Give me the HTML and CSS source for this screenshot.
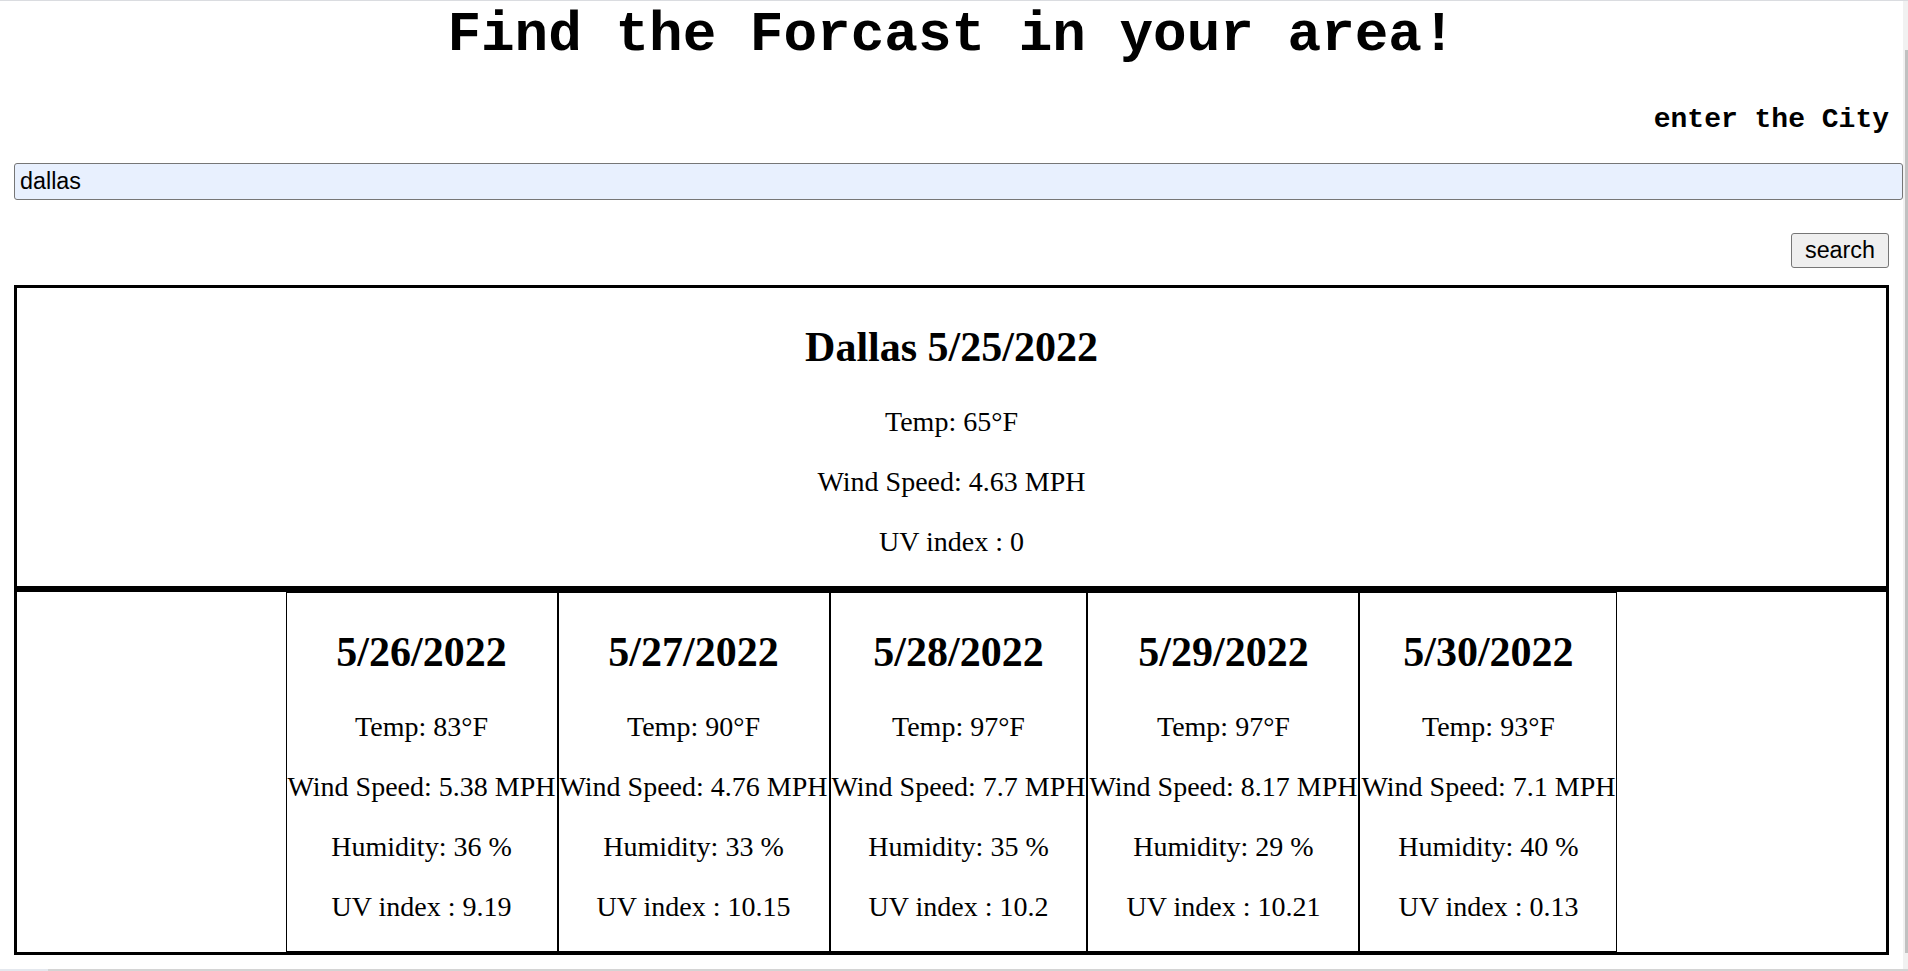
FILE: index.html
```html
<!DOCTYPE html>
<html lang="en">
<head>
<meta charset="utf-8">
<title>Weather Dashboard</title>
<link rel="stylesheet" href="styles.css">
</head>
<body>
<div class="frame">
  <div class="topline"></div>
  <div class="viewport">
    <main class="page">
      <h1 class="title">Find the Forcast in your area!</h1>
      <p class="city-label">enter the City</p>
      <input class="city-input" type="text" value="dallas">
      <div class="search-row"><button class="search-btn" type="button">search</button></div>
      <section class="current">
        <h2>Dallas 5/25/2022</h2>
        <p>Temp: 65°F</p>
        <p>Wind Speed: 4.63 MPH</p>
        <p>UV index : 0</p>
      </section>
      <section class="forecast">
        <div class="card">
          <h2>5/26/2022</h2>
          <p>Temp: 83°F</p>
          <p>Wind Speed: 5.38 MPH</p>
          <p>Humidity: 36 %</p>
          <p>UV index : 9.19</p>
        </div>
        <div class="card">
          <h2>5/27/2022</h2>
          <p>Temp: 90°F</p>
          <p>Wind Speed: 4.76 MPH</p>
          <p>Humidity: 33 %</p>
          <p>UV index : 10.15</p>
        </div>
        <div class="card">
          <h2>5/28/2022</h2>
          <p>Temp: 97°F</p>
          <p>Wind Speed: 7.7 MPH</p>
          <p>Humidity: 35 %</p>
          <p>UV index : 10.2</p>
        </div>
        <div class="card">
          <h2>5/29/2022</h2>
          <p>Temp: 97°F</p>
          <p>Wind Speed: 8.17 MPH</p>
          <p>Humidity: 29 %</p>
          <p>UV index : 10.21</p>
        </div>
        <div class="card">
          <h2>5/30/2022</h2>
          <p>Temp: 93°F</p>
          <p>Wind Speed: 7.1 MPH</p>
          <p>Humidity: 40 %</p>
          <p>UV index : 0.13</p>
        </div>
      </section>
    </main>
    <div class="vscroll"><div class="thumb"></div></div>
  </div>
  <div class="hscroll"><div class="hthumb"></div></div>
</div>
</body>
</html>
```
FILE: styles.css
```css
html, body {
  margin: 0;
  padding: 0;
  background: #fff;
  overflow: hidden;
}

.frame {
  height: 100vh;
  display: flex;
  flex-direction: column;
}

.topline {
  flex: none;
  height: 1px;
  background: #dadce0;
}

.viewport {
  flex: 1;
  min-height: 0;
  display: flex;
}

.page {
  flex: 1;
  min-width: 0;
  padding: 0 14px;
  font-family: "Liberation Serif", "Times New Roman", serif;
  font-size: 28px;
  color: #000;
  overflow: hidden;
}

.vscroll {
  flex: none;
  width: 5px;
  box-sizing: border-box;
  padding: 49px 0 16px 2px;
  background: #f1f1f1;
  display: flex;
  flex-direction: column;
}

.thumb {
  flex: 1;
  background: #c1c1c1;
}

.hscroll {
  flex: none;
  height: 2px;
  background: #e4e8ee;
  display: flex;
  padding-left: 48px;
}

.hthumb {
  flex: 1;
  background: #d4d4d4;
}

.title {
  margin: 2px 0 0;
  font-family: "Liberation Mono", "Courier New", monospace;
  font-weight: bold;
  font-size: 56px;
  line-height: normal;
  text-align: center;
}

.city-label {
  margin: 37px 0 0;
  font-family: "Liberation Mono", "Courier New", monospace;
  font-weight: bold;
  font-size: 28px;
  text-align: right;
}

.city-input {
  display: block;
  box-sizing: border-box;
  width: calc(100% + 14px);
  height: 37px;
  margin: 28px 0 0;
  padding: 0 5px;
  font-family: "Liberation Sans", Arial, sans-serif;
  font-size: 23.33px;
  color: #000;
  background: #e8f0fe;
  border: 1px solid #767676;
  border-radius: 3px;
  outline: none;
}

.search-row {
  display: flex;
  justify-content: flex-end;
  margin-top: 33px;
}

.search-btn {
  height: 35px;
  padding: 0 13px;
  font-family: "Liberation Sans", Arial, sans-serif;
  font-size: 23.33px;
  color: #000;
  background: #efefef;
  border: 1px solid #767676;
  border-radius: 3px;
}

.current {
  margin-top: 17px;
  border: 3px solid #000;
  text-align: center;
}

.current h2,
.card h2 {
  margin: 35px 0;
  font-size: 42px;
  font-weight: bold;
}

.current p,
.card p {
  margin: 28px 0;
  white-space: nowrap;
}

.forecast {
  display: flex;
  justify-content: center;
  border: 3px solid #000;
}

.card {
  padding: 0 1px;
  border: 1px solid #000;
  text-align: center;
}
```
